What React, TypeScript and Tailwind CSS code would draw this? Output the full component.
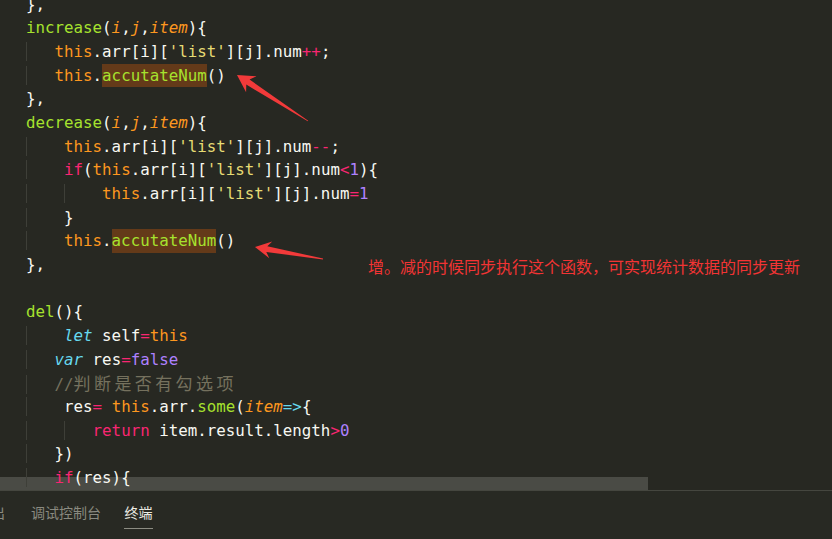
import React from "react";

type Tok = [string, string?, string?];

const C = {
    w: "text-[#f8f8f2]",
    g: "text-[#a6e22e]",
    o: "text-[#fd971f]",
    oi: "text-[#fd971f] italic",
    p: "text-[#f92672]",
    y: "text-[#e6db74]",
    v: "text-[#ae81ff]",
    ci: "text-[#66d9ef] italic",
    c: "text-[#66d9ef]",
    cm: "text-[#75715e]",
};

// indent: list of [spaces, hasGuide]
type Line = { ind: [number, boolean][]; toks: Tok[] };

const params: Tok[] = [["(", "w"], ["i", "oi"], [",", "w"], ["j", "oi"], [",", "w"], ["item", "oi"], ["){", "w"]];
const arrList: Tok[] = [[".arr[i][", "w"], ["'list'", "y"], ["][j].num", "w"]];

const lines: Line[] = [
    { ind: [], toks: [["},", "w"]] },
    { ind: [], toks: [["increase", "g"], ...params] },
    { ind: [[3, true]], toks: [["this", "o"], ...arrList, ["++", "p"], [";", "w"]] },
    { ind: [[3, true]], toks: [["this", "o"], [".", "w"], ["accutateNum", "g", "hl"], ["()", "w"]] },
    { ind: [], toks: [["},", "w"]] },
    { ind: [], toks: [["decrease", "g"], ...params] },
    { ind: [[4, true]], toks: [["this", "o"], ...arrList, ["--", "p"], [";", "w"]] },
    { ind: [[4, true]], toks: [["if", "p"], ["(", "w"], ["this", "o"], ...arrList, ["<", "p"], ["1", "v"], ["){", "w"]] },
    { ind: [[4, true], [4, true]], toks: [["this", "o"], ...arrList, ["=", "p"], ["1", "v"]] },
    { ind: [[4, true]], toks: [["}", "w"]] },
    { ind: [[4, true]], toks: [["this", "o"], [".", "w"], ["accutateNum", "g", "hl"], ["()", "w"]] },
    { ind: [], toks: [["},", "w"]] },
    { ind: [], toks: [] },
    { ind: [], toks: [["del", "g"], ["(){", "w"]] },
    { ind: [[4, true]], toks: [["let", "ci"], [" self", "w"], ["=", "p"], ["this", "o"]] },
    { ind: [[3, true]], toks: [["var", "ci"], [" res", "w"], ["=", "p"], ["false", "v"]] },
    { ind: [[3, true]], toks: [["//", "cm"], ["判断是否有勾选项", "cm", "cjk"]] },
    {
        ind: [[4, true]],
        toks: [["res", "w"], ["=", "p"], [" ", "w"], ["this", "o"], [".arr.", "w"], ["some", "g"], ["(", "w"], ["item", "oi"], ["=>", "c"], ["{", "w"]],
    },
    { ind: [[4, true], [3, true]], toks: [["return", "p"], [" item.result.length", "w"], [">", "p"], ["0", "v"]] },
    { ind: [[3, true]], toks: [["})", "w"]] },
    { ind: [[3, true]], toks: [["if", "p"], ["(res){", "w"]] },
];

function arrowPoints(tip: number[], tail: number[], headLen: number, headW: number, neckW: number) {
    const dx = tail[0] - tip[0];
    const dy = tail[1] - tip[1];
    const len = Math.hypot(dx, dy);
    const ux = dx / len;
    const uy = dy / len;
    const nx = -uy;
    const ny = ux;
    const bx = tip[0] + ux * headLen;
    const by = tip[1] + uy * headLen;
    const kx = tip[0] + ux * (headLen - 4);
    const ky = tip[1] + uy * (headLen - 4);
    const pts = [
        [tip[0], tip[1]],
        [bx + nx * headW, by + ny * headW],
        [kx + nx * neckW, ky + ny * neckW],
        [tail[0] + nx * 0.4, tail[1] + ny * 0.4],
        [tail[0] - nx * 0.4, tail[1] - ny * 0.4],
        [kx - nx * neckW, ky - ny * neckW],
        [bx - nx * headW, by - ny * headW],
    ];
    return pts.map((p) => p.join(",")).join(" ");
}

function CodeLine({ line }: { line: Line }) {
    return (
        <div className="h-[23.68px] whitespace-pre">
            {line.ind.map(([n, guide], i) => (
                <span key={i} className={guide ? "shadow-[inset_1px_0_0_#3e3f38]" : ""}>
                    {" ".repeat(n)}
                </span>
            ))}
            {line.toks.map(([text, col, extra], i) => (
                <span
                    key={i}
                    className={
                        C[(col ?? "w") as keyof typeof C] +
                        (extra === "hl" ? " bg-[#643a19] inline-block h-[23.68px]" : "") +
                        (extra === "cjk" ? " text-[17px] tracking-[3.4px] font-['Noto_Sans_CJK_SC',sans-serif]" : "")
                    }
                >
                    {text}
                </span>
            ))}
        </div>
    );
}

export default function App() {
    return (
        <div className="relative flex h-[539px] w-[832px] flex-col overflow-hidden bg-[#272822]">
            <div className="relative h-[490px] overflow-hidden">
                <div className="absolute bottom-0 left-0 h-[13px] w-[648px] bg-[#4a4b45]" />
                <div className="relative -mt-[7.5px] pl-[26px] font-['DejaVu_Sans_Mono','Liberation_Mono',monospace] text-[15.8px] leading-[23.68px]">
                    {lines.map((l, i) => (
                        <CodeLine key={i} line={l} />
                    ))}
                </div>
            </div>
            <div className="h-px bg-[#45463f]" />
            <div className="flex flex-1 items-start bg-[#282923] pt-[11px] font-['Noto_Sans_CJK_SC',sans-serif] text-[14px] leading-[20px]">
                <span className="ml-[-23px] text-[#8a8a80]">输出</span>
                <span className="ml-[26px] text-[#8a8a80]">调试控制台</span>
                <div className="ml-[23px] flex flex-col items-center">
                    <span className="text-[#ececE4]">终端</span>
                    <div className="mt-[6px] h-px w-[29px] bg-[#8c8c82]" />
                </div>
            </div>

            <svg className="pointer-events-none absolute inset-0" width="832" height="539">
                <polygon points={arrowPoints([237, 75], [308, 121], 17, 9.5, 3)} fill="#f23a3a" />
                <polygon points={arrowPoints([255, 247], [323, 259], 16, 8.5, 3)} fill="#f23a3a" />
            </svg>
            <div className="absolute left-[368px] top-[256px] whitespace-nowrap font-['Noto_Sans_CJK_SC',sans-serif] text-[16px] leading-[20px] text-[#f23434]">
                增。减的时候同步执行这个函数，可实现统计数据的同步更新
            </div>
        </div>
    );
}
